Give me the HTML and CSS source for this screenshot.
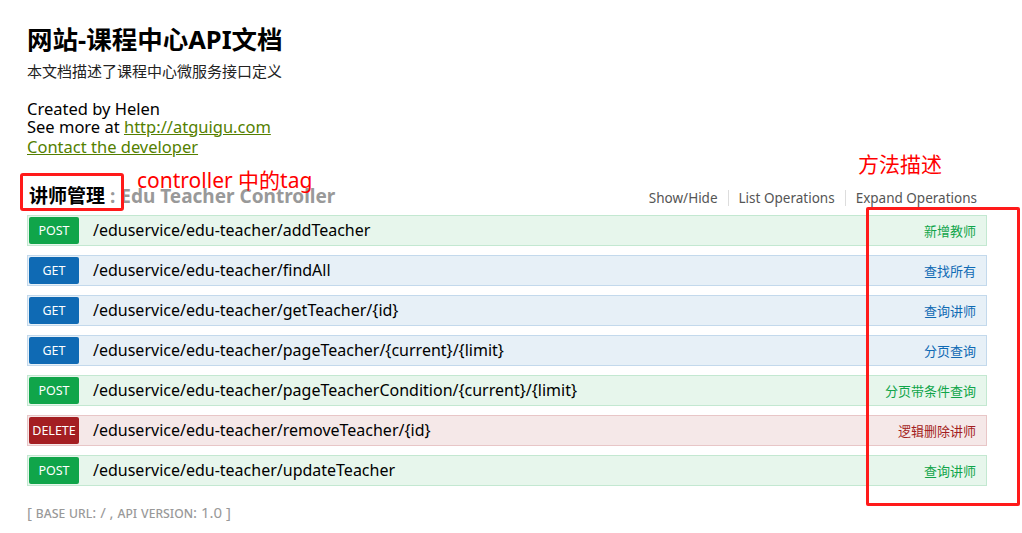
FILE: index.html
```html
<!DOCTYPE html>
<html lang="zh-CN">
<head>
    <meta charset="UTF-8">
    <title>网站-课程中心API文档</title>
    <link rel="stylesheet" href="styles.css">
</head>
<body>
    <div class="container">
        <div class="info">
            <h1 class="info-title">网站-课程中心API文档</h1>
            <div class="info-desc">本文档描述了课程中心微服务接口定义</div>
            <div class="info-meta">
                <div>Created by Helen</div>
                <div>See more at <a href="#">http://atguigu.com</a></div>
                <div><a href="#">Contact the developer</a></div>
            </div>
        </div>

        <div class="resource">
            <div class="resource-head">
                <h2 class="resource-title"><span class="tag">讲师管理</span> <span class="tag-desc">: Edu Teacher Controller</span></h2>
                <ul class="options">
                    <li><a href="#">Show/Hide</a></li>
                    <li><a href="#">List Operations</a></li>
                    <li><a href="#">Expand Operations</a></li>
                </ul>
            </div>

            <ul class="endpoints">
                <li class="op post"><span class="method">POST</span><span class="path">/eduservice/edu-teacher/addTeacher</span><span class="summary">新增教师</span></li>
                <li class="op get"><span class="method">GET</span><span class="path">/eduservice/edu-teacher/findAll</span><span class="summary">查找所有</span></li>
                <li class="op get"><span class="method">GET</span><span class="path">/eduservice/edu-teacher/getTeacher/{id}</span><span class="summary">查询讲师</span></li>
                <li class="op get"><span class="method">GET</span><span class="path">/eduservice/edu-teacher/pageTeacher/{current}/{limit}</span><span class="summary">分页查询</span></li>
                <li class="op post"><span class="method">POST</span><span class="path">/eduservice/edu-teacher/pageTeacherCondition/{current}/{limit}</span><span class="summary">分页带条件查询</span></li>
                <li class="op delete"><span class="method">DELETE</span><span class="path">/eduservice/edu-teacher/removeTeacher/{id}</span><span class="summary">逻辑删除讲师</span></li>
                <li class="op post"><span class="method">POST</span><span class="path">/eduservice/edu-teacher/updateTeacher</span><span class="summary">查询讲师</span></li>
            </ul>
        </div>

        <div class="footer">[ <span class="sc">base url</span>: / , <span class="sc">api version</span>: 1.0 ]</div>
    </div>

    <!-- annotations drawn over the screenshot -->
    <div class="note note-tag">controller 中的tag</div>
    <div class="note note-method">方法描述</div>
    <div class="mark mark-tag"></div>
    <div class="mark mark-method"></div>
</body>
</html>
```

FILE: styles.css
```css
html, body {
    margin: 0;
    padding: 0;
}
body {
    position: relative;
    font-family: "Noto Sans", "Noto Sans CJK SC", sans-serif;
    color: #000;
    background: #fff;
}
.container {
    width: 960px;
    padding: 23px 0 0 27px;
}
.info-title {
    margin: 0;
    font-size: 25.5px;
    line-height: 32px;
    font-weight: bold;
}
.info-desc {
    margin-top: 6px;
    font-size: 15px;
    line-height: 20px;
    color: #222;
}
.info-meta {
    margin-top: 19px;
    font-size: 16.5px;
    line-height: 17.5px;
}
.info-meta a {
    color: #547f00;
}
.info-meta div:last-child {
    margin-top: 3px;
}

.resource {
    margin-top: 21px;
}
.resource-head {
    display: flex;
    justify-content: space-between;
    align-items: flex-end;
    height: 28px;
}
.resource-title {
    margin: 0 0 -3px 2px;
    font-size: 19px;
    line-height: 24px;
    font-weight: bold;
}
.tag-desc {
    color: #999;
}
.options {
    list-style: none;
    margin: 0 10px -1px 0;
    padding: 0;
    display: flex;
    font-size: 13.5px;
    line-height: 16px;
}
.options li {
    padding: 0 10px;
    border-left: 1px solid #ddd;
}
.options li:first-child {
    border-left: none;
}
.options li:last-child {
    padding-right: 0;
}
.options a {
    color: #555;
    text-decoration: none;
}

.endpoints {
    list-style: none;
    margin: 10px 0 0;
    padding: 0;
}
.op {
    display: flex;
    align-items: center;
    height: 29px;
    margin-bottom: 9px;
    padding: 0 10px 0 0;
    border: 1px solid;
}
.method {
    width: 50px;
    height: 27px;
    margin-left: 1px;
    border-radius: 2px;
    color: #fff;
    font-size: 12.5px;
    line-height: 27px;
    text-align: center;
}
.path {
    flex: 1;
    margin-left: 14px;
    font-size: 16px;
}
.summary {
    font-size: 13px;
}
.post {
    background: #e7f6ec;
    border-color: #c3e8d1;
}
.post .method {
    background: #10a54a;
}
.post .summary {
    color: #10a54a;
}
.get {
    background: #e7f0f7;
    border-color: #c3d9ec;
}
.get .method {
    background: #0f6ab4;
}
.get .summary {
    color: #0f6ab4;
}
.delete {
    background: #f5e8e8;
    border-color: #e8c6c7;
}
.delete .method {
    background: #a41e22;
}
.delete .summary {
    color: #a41e22;
}

.footer {
    margin-top: 16px;
    font-size: 15px;
    color: #999;
}
.sc {
    font-variant: small-caps;
}

.note {
    position: absolute;
    color: #ff0000;
    font-size: 21px;
    line-height: 24px;
}
.note-tag {
    left: 137px;
    top: 168px;
}
.note-method {
    left: 858px;
    top: 152px;
}
.mark {
    position: absolute;
    border: 3px solid #ff1a1a;
    border-radius: 3px;
}
.mark-tag {
    left: 20px;
    top: 173px;
    width: 98px;
    height: 32px;
}
.mark-method {
    left: 866px;
    top: 207px;
    width: 148px;
    height: 293px;
    border-radius: 2px;
}
```
